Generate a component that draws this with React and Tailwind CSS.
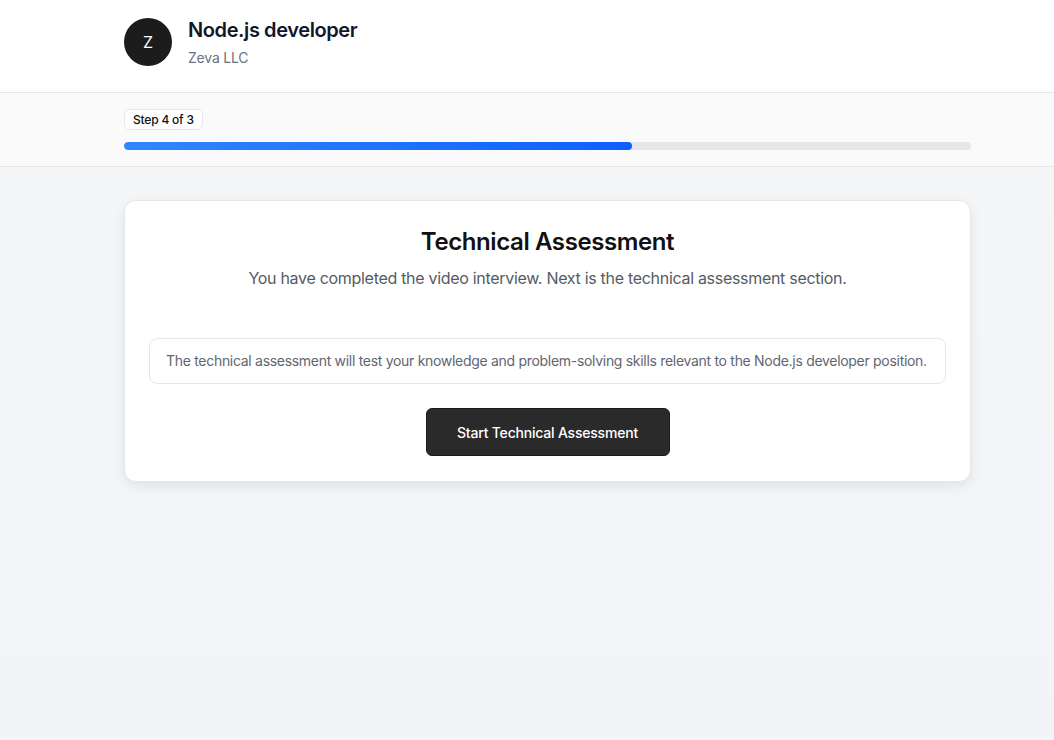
export default function App() {
  const progress = 60;

  return (
    <div className="min-h-screen bg-gradient-to-b from-[#f5f6f8] to-[#f2f4f7] font-['Inter',sans-serif] text-[#111]">
      {/* Header */}
      <header className="bg-white border-b border-[#e5e7eb]">
        <div className="ml-[124px] w-[847px] flex items-center gap-4 pt-4 pb-6">
          <div className="w-12 h-12 rounded-full bg-[#1c1c1c] text-white flex items-center justify-center text-[16px]">
            Z
          </div>
          <div className="flex flex-col gap-[4px]">
            <h1 className="text-[20px] leading-7 font-semibold tracking-[-0.4px] text-[#0f172a]">Node.js developer</h1>
            <p className="text-[14px] leading-5 tracking-[-0.2px] text-[#6b7280]">Zeva LLC</p>
          </div>
        </div>
      </header>

      {/* Progress */}
      <div className="bg-[#fafafa] border-b border-[#e5e7eb]">
        <div className="ml-[124px] w-[847px] pt-4 pb-4">
          <div className="flex w-fit items-center h-[21px] px-2 rounded-md border border-[#e5e7eb] bg-white text-[12px] font-medium tracking-[-0.2px] text-[#111]">
            Step 4 of 3
          </div>
          <div className="mt-3 h-2 w-full rounded-full bg-[#e5e7eb] overflow-hidden">
            <div
              className="h-full rounded-full bg-gradient-to-r from-[#3186ff] to-[#0f5fff]"
              style={{ width: `${progress}%` }}
            />
          </div>
        </div>
      </div>

      {/* Main */}
      <main className="ml-[124px] w-[847px] pt-[33px]">
        <div className="bg-white rounded-xl border border-[#e5e7eb] shadow-[0_4px_12px_rgba(0,0,0,0.08)] px-6 pt-[25px] pb-[25px]">
          <div className="text-center">
            <h2 className="text-[24px] leading-8 font-semibold tracking-[-0.4px] text-[#111]">Technical Assessment</h2>
            <p className="mt-2 text-[16px] leading-6 tracking-[-0.3px] text-[#555b63]">
              You have completed the video interview. Next is the technical assessment section.
            </p>
          </div>

          <div className="mt-12 rounded-lg border border-[#e5e7eb] px-4 py-3 text-[14px] leading-5 tracking-[-0.3px] whitespace-nowrap text-[#5f6670]">
            The technical assessment will test your knowledge and problem-solving skills relevant to the Node.js developer position.
          </div>

          <div className="mt-6 flex justify-center">
            <button className="w-[244px] h-12 rounded-md bg-[#2a2a2a] border border-[#1a1a1a] text-white text-[14px] font-medium tracking-[-0.2px]">
              Start Technical Assessment
            </button>
          </div>
        </div>
      </main>
    </div>
  );
}
